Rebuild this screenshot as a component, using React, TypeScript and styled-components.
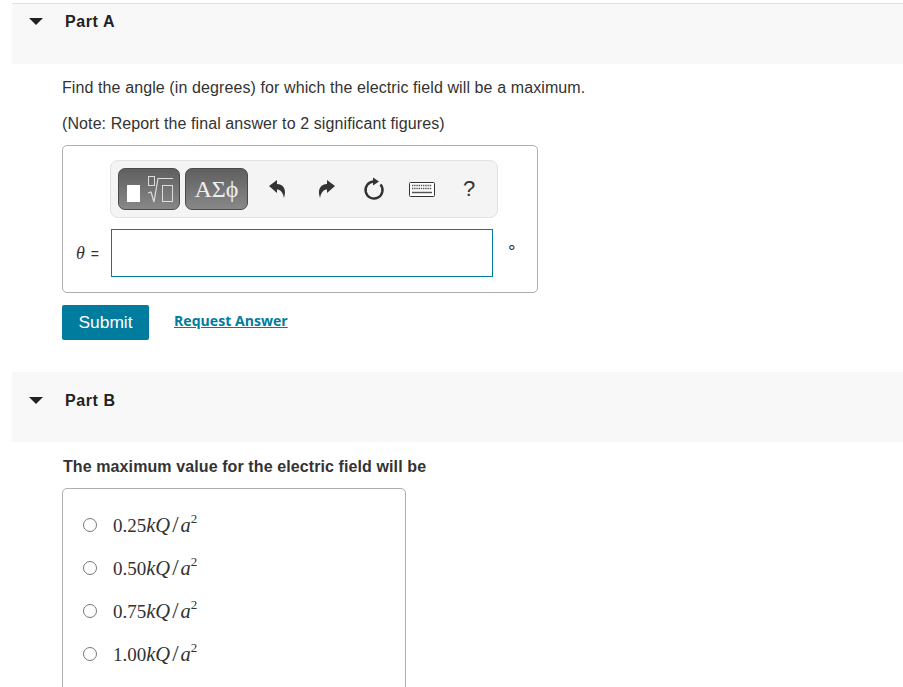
import React from 'react'
import styled, { createGlobalStyle } from 'styled-components'

const GlobalStyle = createGlobalStyle`
  html, body {
    margin: 0;
    padding: 0;
    background: #fff;
    overflow: hidden;
  }
  body {
    font-family: "Liberation Sans", Arial, sans-serif;
    color: #333;
  }
`

const Page = styled.div`
  width: 903px;
  height: 687px;
  overflow: hidden;
  padding-top: 3px;
  box-sizing: border-box;
`

const PartHeader = styled.div<{ $height: number; $top?: boolean }>`
  position: relative;
  height: ${({ $height }) => $height}px;
  margin-left: 12px;
  box-sizing: border-box;
  background: #f8f8f8;
  border-top: ${({ $top }) => ($top ? '1px solid #e0e0e0' : 'none')};
  padding: ${({ $top }) => ($top ? '8px' : '19px')} 0 0 53px;
`

const Caret = styled.span<{ $top: number }>`
  position: absolute;
  left: 17px;
  top: ${({ $top }) => $top}px;
  width: 0;
  height: 0;
  border-left: 7px solid transparent;
  border-right: 7px solid transparent;
  border-top: 7px solid #222;
`

const PartTitle = styled.h2`
  margin: 0;
  font-size: 16px;
  line-height: 20px;
  font-weight: 700;
  letter-spacing: 0.6px;
  color: #222;
`

const PartBody = styled.div`
  padding: 14px 0 0 62px;
`

const Prompt = styled.p`
  margin: 0 0 16px;
  font-size: 16px;
  line-height: 20px;
  letter-spacing: 0.1px;
  color: #333;
`

const BoldPrompt = styled(Prompt)`
  margin: 1px 0 11px 1px;
  font-weight: 700;
`

const AnswerBox = styled.div`
  width: 476px;
  height: 148px;
  box-sizing: border-box;
  margin-top: -5px;
  border: 1px solid #adadad;
  border-radius: 5px;
  padding: 14px 0 0 47px;
`

const Toolbar = styled.div`
  width: 388px;
  height: 58px;
  box-sizing: border-box;
  display: flex;
  align-items: center;
  padding-left: 7px;
  background: #f4f4f4;
  border: 1px solid #e2e2e2;
  border-radius: 8px;
`

const TemplateButton = styled.div<{ $width: number }>`
  width: ${({ $width }) => $width}px;
  height: 42px;
  box-sizing: border-box;
  margin-right: 5px;
  display: flex;
  align-items: center;
  justify-content: center;
  color: #eee;
  font-family: "Liberation Serif", serif;
  font-size: 24px;
  background: linear-gradient(#5f5f5f, #888);
  border: 1px solid #4a4a4a;
  border-radius: 7px;
`

const ToolIcons = styled.div`
  display: flex;
  align-items: center;
  height: 100%;
`

const ToolSlot = styled.div<{ $width: number }>`
  width: ${({ $width }) => $width}px;
  display: flex;
  justify-content: center;
  color: #333;
`

const HelpMark = styled.span`
  font-size: 22px;
  line-height: 24px;
  color: #333;
`

const InputRow = styled.div`
  display: flex;
  align-items: center;
  margin: 11px 0 0 -34px;
`

const ThetaLabel = styled.span`
  width: 35px;
  font-size: 14px;
  color: #333;
  i {
    font-family: "Liberation Serif", serif;
    font-size: 18px;
    margin-right: 2px;
  }
`

const AnswerInput = styled.div`
  width: 382px;
  height: 48px;
  box-sizing: border-box;
  border: 1px solid #007c9e;
`

const Degree = styled.span`
  margin: 0 0 2px 15px;
  font-size: 19px;
  color: #333;
`

const Actions = styled.div`
  display: flex;
  align-items: center;
  margin-top: 12px;
  margin-bottom: 32px;
`

const SubmitButton = styled.button`
  width: 87px;
  height: 35px;
  padding: 0;
  border: none;
  border-radius: 2px;
  background: #007c9e;
  color: #fff;
  font-family: "Liberation Sans", Arial, sans-serif;
  font-size: 17.4px;
`

const RequestLink = styled.a`
  margin: 0 0 4px 25px;
  font-family: "Open Sans", "Liberation Sans", sans-serif;
  font-size: 14.1px;
  font-weight: 700;
  color: #007c9e;
  text-decoration: underline;
`

const ChoiceBox = styled.div`
  width: 344px;
  height: 240px;
  box-sizing: border-box;
  border: 1px solid #adadad;
  border-radius: 5px;
  padding: 14px 0 0 20px;
`

const ChoiceRow = styled.label`
  display: flex;
  align-items: center;
  height: 43px;
`

const Radio = styled.span`
  width: 14px;
  height: 14px;
  box-sizing: border-box;
  border: 1.5px solid #777;
  border-radius: 50%;
  margin-right: 16px;
`

const MathText = styled.span`
  font-family: "Liberation Serif", serif;
  font-size: 19px;
  color: #333;
  i {
    font-size: 20.5px;
  }
  b {
    font-weight: 400;
    font-size: 23px;
    margin: 0 2px;
  }
  sup {
    font-size: 13px;
    line-height: 0;
    position: relative;
    top: -1px;
  }
`

const SqrtIcon = () => (
  <svg width="60" height="40" viewBox="0 0 60 40">
    <rect x="8" y="16" width="13" height="17" fill="#fff" />
    <rect x="29.5" y="7.5" width="6" height="9" fill="none" stroke="#ddd" />
    <path d="M29 24 L32 23 L35 33 L39 9.5 H54" fill="none" stroke="#ddd" strokeWidth="1.2" />
    <rect x="43.5" y="16.5" width="10" height="16" fill="none" stroke="#ddd" />
  </svg>
)

const UndoIcon = ({ flip }: { flip?: boolean }) => (
  <svg width="18" height="20" viewBox="0 0 18 20" style={flip ? { transform: 'scaleX(-1)' } : undefined}>
    <path d="M0 7 L8 1 V5 C14 5 18 10 15 19 C14 13 11 10.5 8 10.5 V14 Z" fill="#333" />
  </svg>
)

const RefreshIcon = () => (
  <svg width="22" height="24" viewBox="0 0 22 24">
    <path d="M11 4.5 A8.5 8.5 0 1 0 17.5 7.5" fill="none" stroke="#333" strokeWidth="2.4" />
    <path d="M10 0.5 L16 4.5 L10 8.5 Z" fill="#333" />
  </svg>
)

const KeyboardIcon = () => (
  <svg width="26" height="15" viewBox="0 0 26 15">
    <rect x="0.5" y="0.5" width="25" height="14" rx="1" fill="#fff" stroke="#333" />
    <path d="M3 3.5 H23 M3 6.5 H23" stroke="#555" strokeWidth="1.6" strokeDasharray="1.4 0.8" />
    <path d="M3 10.5 H23" stroke="#555" strokeWidth="1.5" />
  </svg>
)

const Choice = ({ value }: { value: string }) => (
  <ChoiceRow>
    <Radio />
    <MathText>
      {value}
      <i>kQ</i>
      <b>/</b>
      <i>a</i>
      <sup>2</sup>
    </MathText>
  </ChoiceRow>
)

const CHOICES = ['0.25', '0.50', '0.75', '1.00']

export default function App() {
  return (
    <Page>
      <GlobalStyle />
      <PartHeader $height={61} $top>
        <Caret $top={14} />
        <PartTitle>Part A</PartTitle>
      </PartHeader>
      <PartBody>
        <Prompt>Find the angle (in degrees) for which the electric field will be a maximum.</Prompt>
        <Prompt>(Note: Report the final answer to 2 significant figures)</Prompt>
        <AnswerBox>
          <Toolbar>
            <TemplateButton $width={62}>
              <SqrtIcon />
            </TemplateButton>
            <TemplateButton $width={63}>ΑΣϕ</TemplateButton>
            <ToolIcons>
              <ToolSlot $width={50}>
                <UndoIcon />
              </ToolSlot>
              <ToolSlot $width={46}>
                <UndoIcon flip />
              </ToolSlot>
              <ToolSlot $width={50}>
                <RefreshIcon />
              </ToolSlot>
              <ToolSlot $width={45}>
                <KeyboardIcon />
              </ToolSlot>
              <ToolSlot $width={50}>
                <HelpMark>?</HelpMark>
              </ToolSlot>
            </ToolIcons>
          </Toolbar>
          <InputRow>
            <ThetaLabel>
              <i>θ</i> =
            </ThetaLabel>
            <AnswerInput />
            <Degree>°</Degree>
          </InputRow>
        </AnswerBox>
        <Actions>
          <SubmitButton>Submit</SubmitButton>
          <RequestLink>Request Answer</RequestLink>
        </Actions>
      </PartBody>
      <PartHeader $height={70}>
        <Caret $top={25} />
        <PartTitle>Part B</PartTitle>
      </PartHeader>
      <PartBody>
        <BoldPrompt>The maximum value for the electric field will be</BoldPrompt>
        <ChoiceBox>
          {CHOICES.map((c) => (
            <Choice key={c} value={c} />
          ))}
        </ChoiceBox>
      </PartBody>
    </Page>
  )
}
